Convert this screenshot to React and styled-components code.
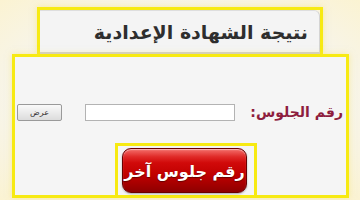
import React from 'react'
import styled, { createGlobalStyle } from 'styled-components'

const GlobalStyle = createGlobalStyle`
  html, body {
    margin: 0;
    padding: 0;
  }
  body {
    width: 360px;
    height: 200px;
    overflow: hidden;
    background: #faf7ea;
    font-family: "DejaVu Sans", "Noto Sans", sans-serif;
  }
`

const Page = styled.div`
  width: 360px;
  height: 200px;
  display: flex;
  flex-direction: column;
  padding-top: 7px;
  box-sizing: border-box;
  background: radial-gradient(ellipse at center, #f6f5f1 55%, #fbf3d2 100%);
`

const HeaderFrame = styled.div`
  margin-left: 37px;
  width: 286px;
  height: 47px;
  box-sizing: border-box;
  border: 3px solid #f7ea12;
  border-bottom: none;
  box-shadow: 0 0 6px rgba(247, 226, 90, 0.5);
  display: flex;
`

const Tab = styled.div`
  flex: 1;
  background: #f4f4f4;
  border-top: 1px solid #dedede;
  border-right: 1px solid #d4d4d4;
  border-radius: 0 6px 0 0;
  border-bottom: 2px solid #cfcfcf;
  display: flex;
  align-items: center;
  justify-content: flex-start;
  padding-right: 11px;
  direction: rtl;
`

const Title = styled.h1`
  margin: 0;
  font-size: 19px;
  font-weight: bold;
  color: #2e2e2e;
  white-space: nowrap;
`

const MainFrame = styled.div`
  margin-left: 12px;
  width: 337px;
  height: 144px;
  box-sizing: border-box;
  border: 3px solid #f7ea12;
  box-shadow: 0 0 6px rgba(247, 226, 90, 0.5);
  background: #f5f5f5;
  display: flex;
  flex-direction: column;
  padding-top: 47px;
`

const Row = styled.div`
  direction: rtl;
  display: flex;
  align-items: center;
  height: 17px;
  padding-right: 3px;
`

const Label = styled.label`
  font-size: 14px;
  font-weight: bold;
  color: #8e1d3e;
  white-space: nowrap;
  width: 93px;
  margin-left: 15px;
  line-height: 17px;
`

const Input = styled.input`
  width: 150px;
  height: 17px;
  box-sizing: border-box;
  border: 1px solid #b3b3b3;
  background: #fff;
  margin: 0 0 0 23px;
  padding: 0;
`

const SmallButton = styled.button`
  width: 45px;
  height: 17px;
  box-sizing: border-box;
  border: 1px solid #9a9a9a;
  border-radius: 2px;
  background: linear-gradient(#fafafa, #dcdcdc);
  font-family: "DejaVu Sans", sans-serif;
  font-size: 8px;
  color: #333;
  padding: 0;
  margin: 0;
`

const RedFrame = styled.div`
  margin-top: auto;
  margin-left: 100px;
  width: 142px;
  height: 52px;
  box-sizing: border-box;
  border: 3px solid #f7ea12;
  border-bottom: none;
  padding: 2px 7px 2px 4px;
  display: flex;
`

const RedButton = styled.button`
  width: 125px;
  height: 45px;
  box-sizing: border-box;
  border: 1px solid #6a0000;
  border-radius: 9px;
  background: linear-gradient(
    #f4706c 0%,
    #e02a28 18%,
    #d10a0a 32%,
    #c00000 60%,
    #8e0000 100%
  );
  box-shadow: inset 0 1px 1px rgba(255, 255, 255, 0.5), 0 1px 2px rgba(0, 0, 0, 0.3);
  color: #fff;
  font-family: "DejaVu Sans", sans-serif;
  font-size: 16px;
  font-weight: bold;
  direction: rtl;
  padding: 2px 0 0 0;
  white-space: nowrap;
  text-shadow: 0 1px 1px rgba(0, 0, 0, 0.4);
`

export default function App () {
  return (
    <>
      <GlobalStyle />
      <Page>
        <HeaderFrame>
          <Tab>
            <Title>نتيجة الشهادة الإعدادية</Title>
          </Tab>
        </HeaderFrame>
        <MainFrame>
          <Row>
            <Label>رقم الجلوس:</Label>
            <Input type='text' />
            <SmallButton>عرض</SmallButton>
          </Row>
          <RedFrame>
            <RedButton>رقم جلوس آخر</RedButton>
          </RedFrame>
        </MainFrame>
      </Page>
    </>
  )
}
